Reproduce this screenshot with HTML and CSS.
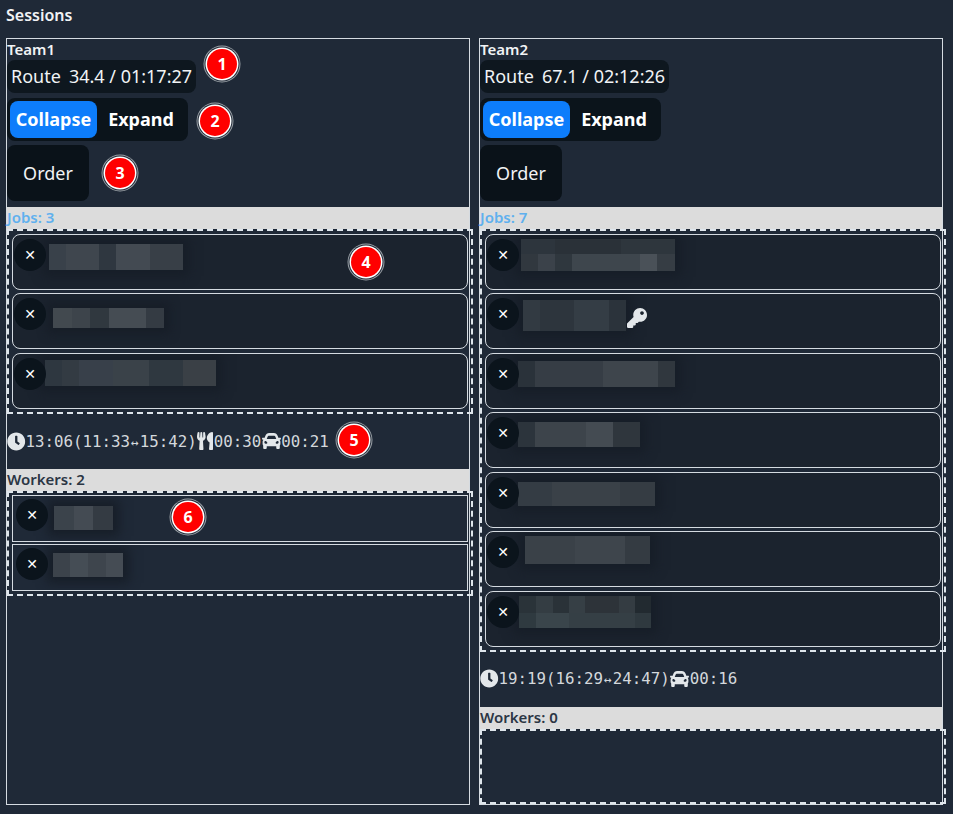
FILE: index.html
```html
<!DOCTYPE html>
<html lang="en">
<head>
<meta charset="utf-8">
<title>Sessions</title>
<link rel="stylesheet" href="styles.css">
</head>
<body>
<svg class="defs" width="0" height="0" aria-hidden="true">
  <symbol id="i-clock" viewBox="0 0 512 512"><path d="M256,8C119,8,8,119,8,256S119,504,256,504,504,393,504,256,393,8,256,8Zm92.49,313h0l-20,25a16,16,0,0,1-22.49,2.5h0l-67-49.72a40,40,0,0,1-15-31.23V112a16,16,0,0,1,16-16h32a16,16,0,0,1,16,16V256l58,42.5A16,16,0,0,1,348.49,321Z"/></symbol>
  <symbol id="i-food" viewBox="0 0 416 512" preserveAspectRatio="none"><path d="M207.9 15.2c.8 4.7 16.1 94.5 16.1 128.8 0 52.3-27.8 89.6-68.9 104.6L168 486.7c.7 13.7-10.2 25.3-24 25.3H80c-13.7 0-24.7-11.5-24-25.3l12.9-238.1C27.7 233.6 0 196.2 0 144 0 109.6 15.3 19.9 16.1 15.2 19.3-5.1 61.4-5.4 64 16.3v141.2c1.3 3.4 15.1 3.2 16 0 1.4-25.3 7.9-139.2 8-141.8 3.3-20.8 44.7-20.8 47.9 0 .2 2.7 6.6 116.5 8 141.8.9 3.2 14.8 3.4 16 0V16.3c2.6-21.6 44.8-21.4 48-1.1zm119.2 285.7l-15 185.1c-1.2 14 9.9 26 23.9 26h56c13.3 0 24-10.7 24-24V24c0-13.2-10.7-24-24-24-82.5 0-221.4 178.5-64.9 300.9z"/></symbol>
  <symbol id="i-car" viewBox="0 64 512 384" preserveAspectRatio="none"><path d="M499.99 176h-59.87l-16.64-41.6C406.38 91.63 365.57 64 319.5 64h-127c-46.06 0-86.88 27.63-103.99 70.4L71.87 176H12.01C4.2 176-1.53 183.34.37 190.91l6 24C7.7 220.25 12.5 224 18.01 224h20.07C24.65 235.73 16 252.78 16 272v48c0 16.12 6.16 30.67 16 41.93V416c0 17.67 14.33 32 32 32h32c17.67 0 32-14.33 32-32v-32h256v32c0 17.67 14.33 32 32 32h32c17.67 0 32-14.33 32-32v-54.07c9.84-11.25 16-25.8 16-41.93v-48c0-19.22-8.65-36.27-22.07-48H494c5.51 0 10.31-3.75 11.64-9.09l6-24c1.89-7.57-3.84-14.91-11.65-14.91zm-352.06-17.83c7.29-18.22 24.94-30.17 44.57-30.17h127c19.63 0 37.28 11.95 44.57 30.17L384 208H128l19.93-49.83zM96 319.8c-19.2 0-32-12.76-32-31.9S76.8 256 96 256s48 28.71 48 47.85-28.8 15.95-48 15.95zm320 0c-19.2 0-48 3.19-48-15.95S396.8 256 416 256s32 12.76 32 31.9-12.8 31.9-32 31.9z"/></symbol>
  <symbol id="i-key" viewBox="0 0 512 512"><path d="M512 176.001C512 273.203 433.202 352 336 352c-11.22 0-22.19-1.062-32.827-3.069l-24.012 27.014A23.999 23.999 0 0 1 261.223 384H224v40c0 13.255-10.745 24-24 24h-40v40c0 13.255-10.745 24-24 24H24c-13.255 0-24-10.745-24-24v-78.059c0-6.365 2.529-12.47 7.029-16.971l161.802-161.802C163.108 213.814 160 195.271 160 176 160 78.798 238.797.001 335.999 0 433.488-.001 512 78.511 512 176.001zM336 128c0 26.51 21.49 48 48 48s48-21.49 48-48-21.49-48-48-48-48 21.49-48 48z"/></symbol>
</svg>

<h1 class="title">Sessions</h1>

<main class="board">
  <section class="team">
    <div class="team-name">Team1</div>
    <div class="route"><span>Route</span><span>34.4 / 01:17:27</span></div>
    <div class="toggle"><button class="seg active">Collapse</button><button class="seg">Expand</button></div>
    <button class="order">Order</button>
    <div class="band band-jobs">Jobs: 3</div>
    <div class="zone">
      <div class="job"><button class="close">✕</button><div class="redact r1"></div></div>
      <div class="job"><button class="close">✕</button><div class="redact r2"></div></div>
      <div class="job"><button class="close">✕</button><div class="redact r3"></div></div>
    </div>
    <div class="stats">
      <svg class="ico"><use href="#i-clock"/></svg><span>13:06(11:33<small class="arrow">↔</small>15:42)</span>
      <svg class="ico ico-food"><use href="#i-food"/></svg><span>00:30</span>
      <svg class="ico ico-car"><use href="#i-car"/></svg><span>00:21</span>
    </div>
    <div class="band">Workers: 2</div>
    <div class="zone zone-workers">
      <div class="worker"><button class="close">✕</button><div class="redact w1"></div></div>
      <div class="worker"><button class="close">✕</button><div class="redact w2"></div></div>
    </div>
  </section>

  <section class="team">
    <div class="team-name">Team2</div>
    <div class="route"><span>Route</span><span>67.1 / 02:12:26</span></div>
    <div class="toggle"><button class="seg active">Collapse</button><button class="seg">Expand</button></div>
    <button class="order">Order</button>
    <div class="band band-jobs">Jobs: 7</div>
    <div class="zone">
      <div class="job"><button class="close">✕</button><div class="redact r4"></div></div>
      <div class="job"><button class="close">✕</button><div class="redact r5"></div><svg class="key"><use href="#i-key"/></svg></div>
      <div class="job"><button class="close">✕</button><div class="redact r6"></div></div>
      <div class="job"><button class="close">✕</button><div class="redact r7"></div></div>
      <div class="job"><button class="close">✕</button><div class="redact r8"></div></div>
      <div class="job"><button class="close">✕</button><div class="redact r9"></div></div>
      <div class="job"><button class="close">✕</button><div class="redact r10"></div></div>
    </div>
    <div class="stats">
      <svg class="ico"><use href="#i-clock"/></svg><span>19:19(16:29<small class="arrow">↔</small>24:47)</span>
      <svg class="ico ico-car"><use href="#i-car"/></svg><span>00:16</span>
    </div>
    <div class="band">Workers: 0</div>
    <div class="zone zone-empty"></div>
  </section>
</main>

<span class="badge b-1">1</span>
<span class="badge b-2">2</span>
<span class="badge b-3">3</span>
<span class="badge b-4">4</span>
<span class="badge b-5">5</span>
<span class="badge b-6">6</span>
</body>
</html>
```
FILE: styles.css
```css
* { box-sizing: border-box; }
html, body { margin: 0; height: 100%; }
body {
  position: relative;
  width: 953px;
  height: 814px;
  overflow: hidden;
  background: #1f2937;
  color: #f1f3f5;
  font-family: "Noto Sans", sans-serif;
}
.defs { position: absolute; }
button { font-family: inherit; border: 0; padding: 0; color: inherit; }

.title {
  margin: 0;
  height: 38px;
  padding: 5px 0 0 6px;
  font-size: 16px;
  line-height: 21px;
  font-weight: 600;
}
.board { display: flex; gap: 9px; padding-left: 6px; }
.team {
  width: 464px;
  height: 767px;
  border: 1px solid #d5dbe1;
  display: flex;
  flex-direction: column;
  align-items: flex-start;
}
.team-name {
  height: 21px;
  padding-top: 1px;
  font-size: 15px;
  line-height: 18px;
  font-weight: 600;
}
.route {
  display: flex;
  gap: 8px;
  align-items: center;
  height: 33px;
  padding: 0 4px 1px;
  border-radius: 8px;
  background: #0e171f;
  font-size: 18px;
}
.toggle {
  display: flex;
  align-items: center;
  height: 43px;
  margin-top: 5px;
  padding: 0 3px;
  border-radius: 8px;
  background: #0b141b;
}
.seg {
  height: 37px;
  width: 87px;
  padding-bottom: 2px;
  border-radius: 8px;
  background: transparent;
  font-size: 18px;
  font-weight: 700;
  color: #fff;
}
.seg + .seg { width: 88px; }
.seg.active { background: #0d7dfb; }
.order {
  width: 82px;
  height: 56px;
  margin-top: 4px;
  border-radius: 8px;
  background: #0a1219;
  font-size: 18px;
  color: #f1f3f5;
}
.band {
  align-self: stretch;
  height: 22px;
  background: #dcdcdc;
  color: #2b3644;
  font-size: 15px;
  line-height: 21px;
  font-weight: 600;
}
.band-jobs { margin-top: 6px; color: #5fb0ee; }
.zone {
  width: 466px;
  border: 2px dashed #dfe6ec;
  padding: 3px;
  display: flex;
  flex-direction: column;
  gap: 3.45px;
}
.job, .worker {
  display: flex;
  align-items: flex-start;
  border: 1px solid #d5dbe1;
  background: #1b232e;
  overflow: hidden;
}
.job { height: 56px; border-radius: 8px; }
.worker { height: 46.5px; background: #1f2937; }
.zone-workers { padding: 2px 3px 3px; gap: 2.5px; }
.zone-empty { flex: 1; }
.close {
  flex: none;
  width: 32px;
  height: 32px;
  margin: 4px 0 0 1px;
  border-radius: 50%;
  background: #0b141c;
  color: #fff;
  font-size: 14px;
  line-height: 32px;
  font-family: "DejaVu Sans", sans-serif;
  position: relative;
  z-index: 1;
}
.worker .close { margin: 3px 0 0 3px; }

.stats {
  display: flex;
  align-items: center;
  height: 55.3px;
  padding-bottom: 1px;
  font-family: "DejaVu Sans Mono", monospace;
  font-size: 15.8px;
  color: #d4d8dc;
}
.arrow { display: inline-block; width: 9.5px; text-align: center; font-size: 13px; }
.ico { width: 18.5px; height: 19px; fill: #e3e7ea; flex: none; }
.ico-food { width: 16px; height: 18px; margin-right: 1px; }
.ico-car { width: 19px; height: 16px; margin: 0 0.5px 0 0.5px; }
.key {
  position: relative;
  width: 20px;
  height: 20px;
  fill: #e3e7ea;
  flex: none;
  margin: 14px 0 0 1px;
}

.redact {
  flex: none;
  box-shadow: 0 0 10px 6px #171e28;
  filter: blur(0.6px);
}
.r1 { width: 134px; height: 26px; margin: 9px 0 0 3px;
  background: linear-gradient(90deg, #39414a 0 17px, #3f464e 17px 50px, #2f3740 50px 67px, #434a52 67px 101px, #383f47 101px); }
.r2 { width: 111px; height: 20px; margin: 14px 0 0 7px;
  background: linear-gradient(90deg, #42494f 0 19px, #3d444b 19px 37px, #30383f 37px 56px, #454c53 56px 93px, #343b43 93px); }
.r3 { width: 171px; height: 26px; margin: 6px 0 0 -1px;
  background: linear-gradient(90deg, #2e3740 0 17px, #333b43 17px 34px, #38404a 34px 68px, #3a4249 68px 104px, #2f3840 104px 138px, #3a4046 138px); }
.r4 { width: 154px; height: 32px; margin: 4px 0 0 2px;
  background:
    linear-gradient(90deg, #2d353d 0 34px, #2a3138 34px 100px, #2e363d 100px) top / 100% 15px no-repeat,
    linear-gradient(90deg, #31383f 0 17px, #3b424a 17px 34px, #2f373e 34px 51px, #3e464d 51px 119px, #4a5158 119px 136px, #363d44 136px) bottom / 100% 17px no-repeat; }
.r5 { width: 103px; height: 31px; margin: 6px 0 0 4px;
  background: linear-gradient(90deg, #323a42 0 17px, #2d353d 17px 51px, #343d45 51px 86px, #2b333b 86px); }
.r6 { width: 157px; height: 26px; margin: 7px 0 0 -1px;
  background: linear-gradient(90deg, #2a323a 0 17px, #363d45 17px 85px, #3e454c 85px 140px, #30373e 140px); }
.r7 { width: 122px; height: 25px; margin: 9px 0 0 -1px;
  background: linear-gradient(90deg, #2c343c 0 17px, #3d444b 17px 68px, #444b52 68px 95px, #2f363d 95px); }
.r8 { width: 137px; height: 24px; margin: 9px 0 0 -1px;
  background: linear-gradient(90deg, #343c44 0 34px, #3a4148 34px 102px, #353c43 102px); }
.r9 { width: 125px; height: 28px; margin: 4px 0 0 6px;
  background: linear-gradient(90deg, #3a4148 0 50px, #3e454c 50px 100px, #343b42 100px); }
.r10 { width: 132px; height: 32px; margin: 4px 0 0 0;
  background:
    linear-gradient(90deg, #2a3339 0 17px, #343d43 17px 34px, #2a3238 34px 50px, #363f45 50px 66px, #2d3339 66px 100px, #343c42 100px 116px, #222a30 116px) top / 100% 17px no-repeat,
    linear-gradient(90deg, #2f3a40 0 17px, #3a454b 17px 50px, #353f45 50px 116px, #2f393f 116px) bottom / 100% 15px no-repeat; }
.w1 { width: 59px; height: 24px; margin: 10px 0 0 6px;
  background: linear-gradient(90deg, #3b434b 0 20px, #444b53 20px 39px, #343b43 39px); }
.w2 { width: 70px; height: 24px; margin: 8px 0 0 5px;
  background: linear-gradient(90deg, #3c434b 0 17px, #454d55 17px 35px, #3e454d 35px 53px, #454c54 53px); }

.badge {
  position: absolute;
  display: flex;
  align-items: center;
  justify-content: center;
  width: 30px;
  height: 30px;
  border-radius: 50%;
  background: #ff0000;
  box-shadow: 0 0 0 1.5px #fff, 0 0 0 2.5px #1f2937, 0 0 0 3.5px #9aa0a6;
  color: #fff;
  font-size: 16px;
  font-weight: 700;
}
.b-1 { left: 207px; top: 49px; }
.b-2 { left: 200px; top: 106px; }
.b-3 { left: 105px; top: 158px; }
.b-4 { left: 351px; top: 247px; }
.b-5 { left: 339px; top: 425px; }
.b-6 { left: 173px; top: 502px; }
```
